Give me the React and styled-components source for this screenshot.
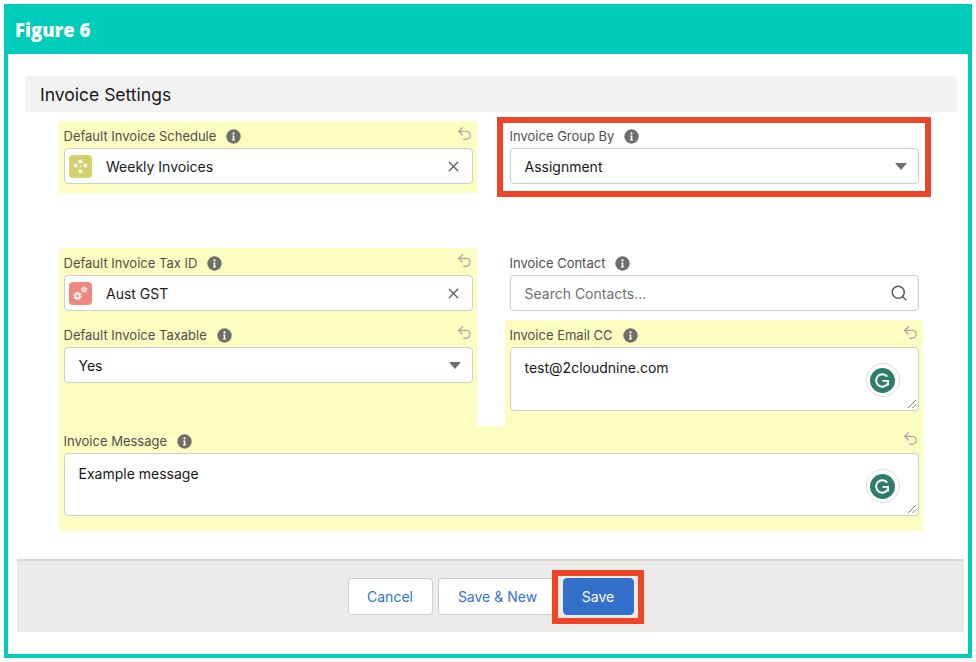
import React from "react";
import styled, { createGlobalStyle } from "styled-components";
import { Search, Undo2, X } from "lucide-react";

const GlobalStyle = createGlobalStyle`
    body {
        margin: 0;
        background: #fff;
        font-family: Inter, "Liberation Sans", sans-serif;
    }
`;

const Frame = styled.div`
    box-sizing: border-box;
    display: flex;
    flex-direction: column;
    width: 968px;
    height: 654px;
    margin: 4px;
    border: 4px solid #00ccbb;
    border-top: 0;
    background: #fff;
`;

const Banner = styled.h1`
    display: flex;
    align-items: center;
    height: 50px;
    margin: 0 -4px;
    padding-left: 11px;
    background: #00ccbb;
    color: #fff;
    font-family: "Open Sans", sans-serif;
    font-size: 18.5px;
    font-weight: 800;
`;

const SectionHeading = styled.h2`
    display: flex;
    align-items: center;
    height: 36px;
    margin: 22px 11px 9px 17px;
    padding-left: 15px;
    border-radius: 4px;
    background: #f3f2f2;
    color: #181818;
    font-size: 17.5px;
    font-weight: 400;
`;

const FormGrid = styled.div`
    display: grid;
    grid-template-columns: 418px 418px;
    column-gap: 28px;
    margin-left: 51px;
`;

const FirstRowField = styled.div`
    margin-bottom: 55px;
`;

const Column = styled.div`
    background: ${(p) => (p.$changed ? "#fbfdc1" : "transparent")};
`;

const Wide = styled.div`
    grid-column: 1 / 3;
`;

const Field = styled.div`
    position: relative;
    padding: 4px 4.5px ${(p) => p.$bottom || 9}px;
    background: ${(p) => (p.$changed ? "#fbfdc1" : "transparent")};

    ${(p) =>
        p.$marked &&
        `&::after {
            content: "";
            position: absolute;
            inset: -4px -8px;
            border: 6px solid #ee4527;
        }`}
`;

const LabelRow = styled.div`
    display: flex;
    align-items: center;
    height: 22px;
    margin-bottom: 1px;
    color: #514f4d;
    font-size: 13px;
`;

const InfoMark = styled.svg`
    width: 15px;
    height: 15px;
    margin-left: 10px;
`;

const UndoMark = styled(Undo2)`
    width: 17px;
    height: 17px;
    margin-left: auto;
    margin-top: -5px;
    color: #b0adab;
`;

const Input = styled.div`
    box-sizing: border-box;
    position: relative;
    display: flex;
    align-items: ${(p) => (p.$tall ? "flex-start" : "center")};
    height: ${(p) => p.$height || 36}px;
    padding: ${(p) => (p.$tall ? "11px 14px 0" : p.$hasIcon ? "0 10px 0 4.5px" : "0 11px 0 14px")};
    border: 1.5px solid #cfcdcb;
    border-radius: 4px;
    background: #fff;
    color: #181818;
    font-size: 14px;
`;

const ObjectIcon = styled.span`
    display: flex;
    align-items: center;
    justify-content: center;
    width: 23px;
    height: 23px;
    margin-right: 14px;
    border-radius: 4px;
    background: ${(p) => p.$color};
`;

const Value = styled.span`
    flex: 1;
    color: ${(p) => (p.$placeholder ? "#706e6b" : "#181818")};
`;

const ClearMark = styled(X)`
    width: 17px;
    height: 17px;
    color: #5c5a58;
`;

const SearchMark = styled(Search)`
    width: 18px;
    height: 18px;
    margin-right: -1px;
    color: #5c5a58;
`;

const Caret = styled.svg`
    width: 12px;
    height: 7px;
`;

const GrammarlyBadge = styled.div`
    box-sizing: border-box;
    position: absolute;
    top: 15px;
    right: 18px;
    display: flex;
    align-items: center;
    justify-content: center;
    width: 34px;
    height: 34px;
    border: 1px solid #dcdce4;
    border-radius: 50%;
    background: #fff;
`;

const ResizeGrip = styled.svg`
    position: absolute;
    right: 1px;
    bottom: 1px;
    width: 10px;
    height: 10px;
`;

const Footer = styled.div`
    display: flex;
    justify-content: center;
    align-items: center;
    gap: 5px;
    height: 71px;
    margin: 28px 4px 0 9px;
    border-top: 2px solid #d9d8d7;
    background: #ecebea;
`;

const Button = styled.button`
    position: relative;
    box-sizing: border-box;
    width: ${(p) => p.$width}px;
    height: 37px;
    padding: 0;
    border: 1.5px solid ${(p) => (p.$primary ? "#3370c9" : "#cfcdcb")};
    border-radius: 4px;
    background: ${(p) => (p.$primary ? "#3370c9" : "#fff")};
    color: ${(p) => (p.$primary ? "#fff" : "#3273cf")};
    font-family: inherit;
    font-size: 14px;

    ${(p) =>
        p.$marked &&
        `&::after {
            content: "";
            position: absolute;
            inset: -9.5px -11.5px;
            border: 6px solid #ee4527;
        }`}
`;

const Info = () => (
    <InfoMark viewBox="0 0 15 15">
        <circle cx="7.5" cy="7.5" r="7.2" fill="#706e6b" />
        <circle cx="7.5" cy="4.4" r="1.1" fill="#fff" />
        <path d="M6.2 6.5h2.1v4h.8v1H5.9v-1h.8v-3h-.5z" fill="#fff" />
    </InfoMark>
);

const DownCaret = () => (
    <Caret viewBox="0 0 12 7">
        <path d="M0 0h12L6 7z" fill="#706e6b" />
    </Caret>
);

const Grammarly = () => (
    <GrammarlyBadge>
        <svg width="25" height="25" viewBox="0 0 25 25">
            <circle cx="12.5" cy="12.5" r="12.5" fill="#2f7c6c" />
            <path d="M17.2 8.6A6.2 6.2 0 1 0 17.8 15.4" fill="none" stroke="#fff" strokeWidth="2" />
            <path d="M12.5 12.8h5.6v4.6" fill="none" stroke="#fff" strokeWidth="1.8" />
        </svg>
    </GrammarlyBadge>
);

const Grip = () => (
    <ResizeGrip viewBox="0 0 10 10">
        <path d="M1 9 9 1M5.5 9 9 5.5" stroke="#77756f" strokeWidth="1" />
    </ResizeGrip>
);

const ScheduleIcon = () => (
    <svg width="15" height="15" viewBox="0 0 15 15" fill="#fff">
        <circle cx="7.5" cy="2.6" r="2" />
        <circle cx="2.6" cy="6.6" r="2" />
        <circle cx="12.3" cy="6.6" r="2" />
        <circle cx="7.5" cy="12.2" r="2" />
        <circle cx="7.5" cy="7.4" r="0.9" />
    </svg>
);

const GearsIcon = () => (
    <svg width="17" height="17" viewBox="0 0 17 17" fill="none" stroke="#fff">
        <circle cx="5.5" cy="11" r="2.2" strokeWidth="1.6" />
        <circle cx="5.5" cy="11" r="3.6" strokeWidth="1.3" strokeDasharray="1.5 1.3" />
        <circle cx="12" cy="4.6" r="1.6" strokeWidth="1.2" />
        <circle cx="12" cy="4.6" r="2.8" strokeWidth="1" strokeDasharray="1.2 1" />
    </svg>
);

const Label = ({ text, changed }) => (
    <LabelRow>
        {text}
        <Info />
        {changed && <UndoMark strokeWidth={2} />}
    </LabelRow>
);

const App = () => (
    <>
        <GlobalStyle />
        <Frame>
            <Banner>Figure 6</Banner>
            <SectionHeading>Invoice Settings</SectionHeading>
            <FormGrid>
                <FirstRowField>
                    <Field $changed>
                        <Label text="Default Invoice Schedule" changed />
                        <Input $hasIcon>
                            <ObjectIcon $color="#d2d16c">
                                <ScheduleIcon />
                            </ObjectIcon>
                            <Value>Weekly Invoices</Value>
                            <ClearMark strokeWidth={1.8} />
                        </Input>
                    </Field>
                </FirstRowField>
                <FirstRowField>
                    <Field $marked>
                        <Label text="Invoice Group By" />
                        <Input>
                            <Value>Assignment</Value>
                            <DownCaret />
                        </Input>
                    </Field>
                </FirstRowField>

                <Column $changed>
                    <Field>
                        <Label text="Default Invoice Tax ID" changed />
                        <Input $hasIcon>
                            <ObjectIcon $color="#ec8a82">
                                <GearsIcon />
                            </ObjectIcon>
                            <Value>Aust GST</Value>
                            <ClearMark strokeWidth={1.8} />
                        </Input>
                    </Field>
                    <Field>
                        <Label text="Default Invoice Taxable" changed />
                        <Input>
                            <Value>Yes</Value>
                            <DownCaret />
                        </Input>
                    </Field>
                </Column>
                <Column>
                    <Field>
                        <Label text="Invoice Contact" />
                        <Input>
                            <Value $placeholder>Search Contacts...</Value>
                            <SearchMark strokeWidth={2} />
                        </Input>
                    </Field>
                    <Field $changed $bottom={15}>
                        <Label text="Invoice Email CC" changed />
                        <Input $tall $height={64}>
                            <Value>test@2cloudnine.com</Value>
                            <Grammarly />
                            <Grip />
                        </Input>
                    </Field>
                </Column>

                <Wide>
                    <Field $changed $bottom={15}>
                        <Label text="Invoice Message" changed />
                        <Input $tall $height={63}>
                            <Value>Example message</Value>
                            <Grammarly />
                            <Grip />
                        </Input>
                    </Field>
                </Wide>
            </FormGrid>
            <Footer>
                <Button $width={85}>Cancel</Button>
                <Button $width={120}>Save &amp; New</Button>
                <Button $width={71} $primary $marked>
                    Save
                </Button>
            </Footer>
        </Frame>
    </>
);

export default App;
